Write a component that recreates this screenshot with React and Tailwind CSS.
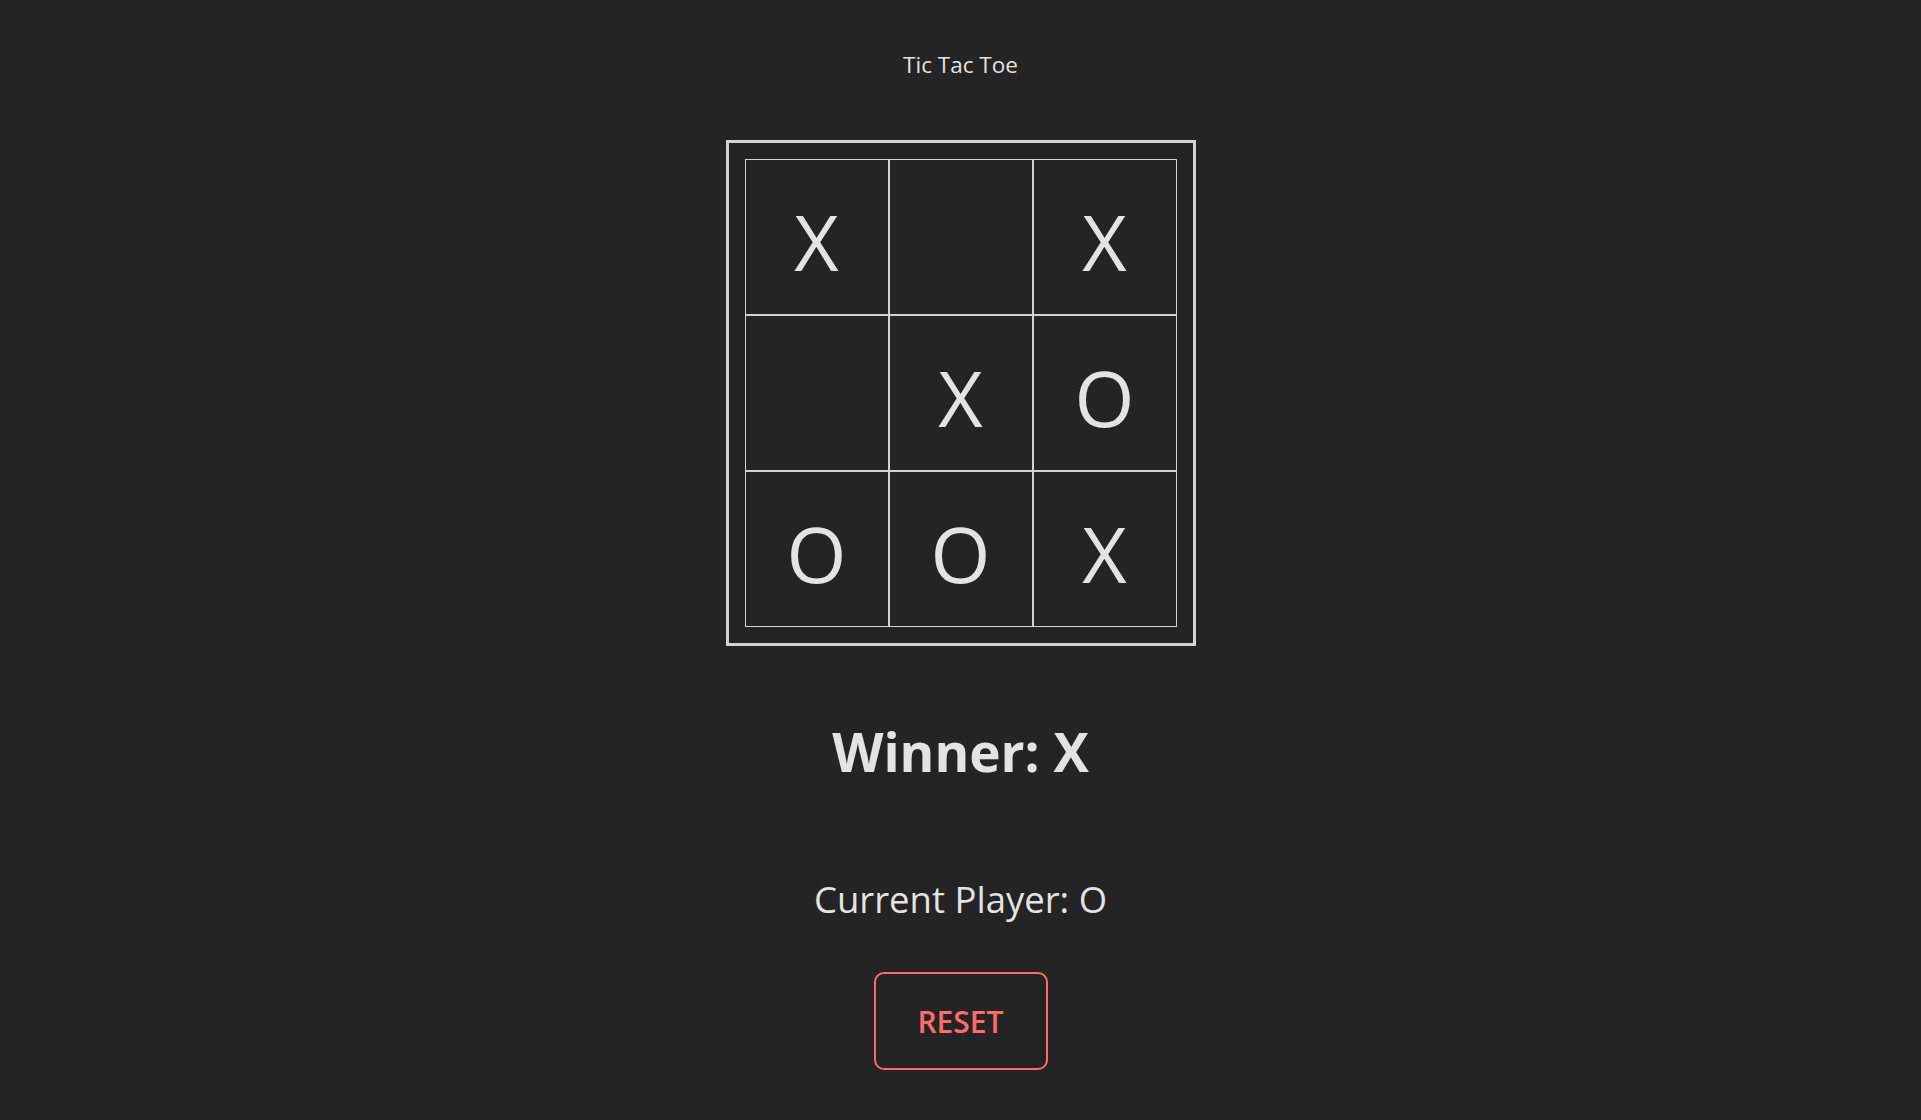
import { useState } from "react";

const START = ["X", "", "X", "", "X", "O", "O", "O", "X"];

function Cell({ value, onClick }) {
  return (
    <button
      onClick={onClick}
      className="w-[144px] h-[156px] border border-[#d3d3d3] flex items-center justify-center pt-2 text-[77px] leading-none text-[#e3e3e3]"
    >
      {value}
    </button>
  );
}

export default function App() {
  const [board, setBoard] = useState(START);
  const [player, setPlayer] = useState("O");
  const winner = "X";

  function play(i) {
    if (board[i]) return;
    const next = board.slice();
    next[i] = player;
    setBoard(next);
    setPlayer(player === "X" ? "O" : "X");
  }

  function reset() {
    setBoard(Array(9).fill(""));
    setPlayer("X");
  }

  return (
    <div className="min-h-screen bg-[#242424] text-[#e3e3e3] font-['Open_Sans',sans-serif] flex flex-col items-center">
      <p className="mt-[51px] text-[22.5px] leading-[28px]">Tic Tac Toe</p>

      {/* Plateau */}
      <div className="mt-[61px] border-[3px] border-[#d3d3d3] p-4">
        <div className="grid grid-cols-3">
          {board.map((v, i) => (
            <Cell key={i} value={v} onClick={() => play(i)} />
          ))}
        </div>
      </div>

      <h2 className="mt-[74px] text-[53px] leading-[64px] font-bold">Winner: {winner}</h2>

      <p className="mt-[93px] text-[36.5px] leading-[44px]">Current Player: {player}</p>

      <button
        onClick={reset}
        className="mt-[51px] w-[174px] h-[98px] border-2 border-[#ff6b6b] rounded-[10px] text-[#ff6b6b] text-[30px] font-semibold"
      >
        RESET
      </button>
    </div>
  );
}
